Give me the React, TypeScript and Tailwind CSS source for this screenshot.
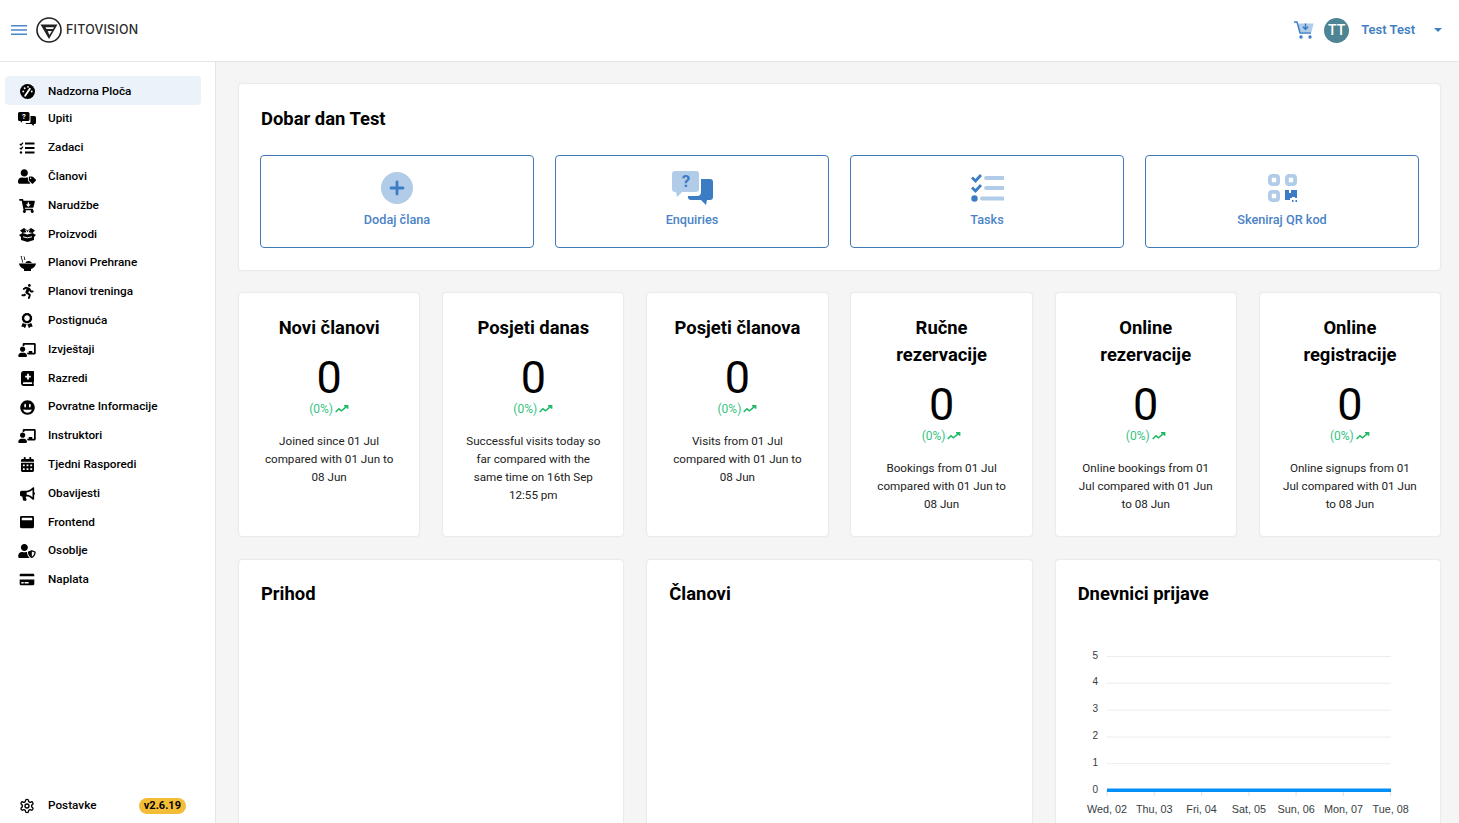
import React from "react";
import {
  FaUserTag, FaRunning, FaAward, FaChalkboardTeacher,
  FaBookMedical, FaGrinAlt, FaCalendarAlt, FaBullhorn, FaWindowMaximize, FaUserShield, FaCreditCard, FaCartArrowDown,
} from "react-icons/fa";
import { LuSettings } from "react-icons/lu";

type IconProps = { className?: string };

const Chat = ({ className }: IconProps) => (
  <svg viewBox="0 0 18 14" className={className} fill="currentColor">
    <path d="M1.500 0h8.500A1.500 1.500 0 0 1 11.500 1.500v6A1.500 1.500 0 0 1 10 9H4.500L3 10.800 2.500 9h-1A1.500 1.500 0 0 1 0 7.500v-6A1.500 1.500 0 0 1 1.500 0z" />
    <path d="M12.500 4h4A1.500 1.500 0 0 1 18 5.500v5a1.500 1.500 0 0 1-1.500 1.500H16l-.5 2-2-2H8.500a1.200 1.200 0 0 1-1-1h4a1 1 0 0 0 1-1z" />
    <text x="5.800" y="7.300" fontSize="7.500" fontWeight="700" textAnchor="middle" fill="#fff" fontFamily="Roboto, sans-serif">?</text>
  </svg>
);

const TaskList = ({ className }: IconProps) => (
  <svg viewBox="0 0 16 12" className={className} fill="none" stroke="currentColor">
    <path d="M.8 1.800 2 3 4 .6M.8 5.800 2 7 4 4.600" strokeWidth="1.200" />
    <circle cx="2" cy="10.500" r="1.200" fill="currentColor" stroke="none" />
    <path d="M6 1.500h9.500M6 6h9.500M6 10.500h9.500" strokeWidth="1.800" />
  </svg>
);

const Gauge = ({ className }: IconProps) => (
  <svg viewBox="0 0 16 16" className={className}>
    <circle cx="8" cy="8" r="8" fill="currentColor" />
    <path d="M5.500 12.500 10.500 5" stroke="#fff" strokeWidth="2" strokeLinecap="round" />
    <circle cx="3.500" cy="8" r="1" fill="#fff" />
    <circle cx="5" cy="4.500" r="1" fill="#fff" />
    <circle cx="8.500" cy="3" r="1" fill="#fff" />
    <circle cx="12.500" cy="8" r="1" fill="#fff" />
  </svg>
);

const BoxBits = ({ className }: IconProps) => (
  <svg viewBox="0 0 17 15" className={className} fill="currentColor">
    <path d="M1 3.500 5 1l3.500 2.500L12 1l4 2.500-2.500 2.500L8.500 5 3.500 6z" />
    <path d="M0 8l3.500-2 5 1.500L13.500 6 17 8l-2 2v3l-6.500 2L2 13v-3z" />
    <path d="M4 9.800l4.500 1 4.500-1" fill="none" stroke="#fff" strokeWidth="1" />
    <path d="M6.500 2.800 8.500 6l2-3.200" fill="none" stroke="#fff" strokeWidth="1" />
  </svg>
);

const Bowl = ({ className }: IconProps) => (
  <svg viewBox="0 0 17 15" className={className} fill="currentColor">
    <path d="M0 7.500h17C16.500 10.500 14.500 12.300 12 13v2H5v-2C2.500 12.300.500 10.500 0 7.500z" />
    <path d="M6.500 7 C7 4.500 11 4 13 7z" />
    <path d="M2 0c1 1.500 0 2 1 3.500s0 2 .6 3M5 .5c1 1.500 0 2 1 3.500" fill="none" stroke="currentColor" strokeWidth="1" />
  </svg>
);

const CartDuo = ({ className }: IconProps) => (
  <svg viewBox="0 0 20 18" className={className}>
    <path d="M4 2.500h15.500L17.500 11H5.500z" fill="#b1cce9" />
    <path d="M0 1h3l3 11h11" fill="none" stroke="#3b7cc4" strokeWidth="1.400" />
    <path d="M11.500 2.500v5M9 5.800l2.500 2.700 2.500-2.700" fill="none" stroke="#3b7cc4" strokeWidth="1.500" />
    <circle cx="7" cy="16" r="1.700" fill="#3b7cc4" />
    <circle cx="16" cy="16" r="1.700" fill="#3b7cc4" />
  </svg>
);

const nav: [string, React.ComponentType<IconProps>, string][] = [
  ["Nadzorna Ploča", Gauge, "w-[15px] h-[15px]"],
  ["Upiti", Chat, "w-[18px] h-[14px]"],
  ["Zadaci", TaskList, "w-[16px] h-[12px]"],
  ["Članovi", FaUserTag, "w-[18px] h-[15px]"],
  ["Narudžbe", FaCartArrowDown, "w-[16px] h-[14px]"],
  ["Proizvodi", BoxBits, "w-[17px] h-[15px]"],
  ["Planovi Prehrane", Bowl, "w-[17px] h-[15px]"],
  ["Planovi treninga", FaRunning, "w-[13px] h-[15px]"],
  ["Postignuća", FaAward, "w-[12px] h-[15px]"],
  ["Izvještaji", FaChalkboardTeacher, "w-[18px] h-[14px]"],
  ["Razredi", FaBookMedical, "w-[13px] h-[15px]"],
  ["Povratne Informacije", FaGrinAlt, "w-[15px] h-[15px]"],
  ["Instruktori", FaChalkboardTeacher, "w-[18px] h-[14px]"],
  ["Tjedni Rasporedi", FaCalendarAlt, "w-[13px] h-[15px]"],
  ["Obavijesti", FaBullhorn, "w-[15px] h-[14px]"],
  ["Frontend", FaWindowMaximize, "w-[14px] h-[14px]"],
  ["Osoblje", FaUserShield, "w-[18px] h-[14px]"],
  ["Naplata", FaCreditCard, "w-[16px] h-[13px]"],
];

const stats = [
  ["Novi članovi", "Joined since 01 Jul compared with 01 Jun to 08 Jun"],
  ["Posjeti danas", "Successful visits today so far compared with the same time on 16th Sep 12:55 pm"],
  ["Posjeti članova", "Visits from 01 Jul compared with 01 Jun to 08 Jun"],
  ["Ručne rezervacije", "Bookings from 01 Jul compared with 01 Jun to 08 Jun"],
  ["Online rezervacije", "Online bookings from 01 Jul compared with 01 Jun to 08 Jun"],
  ["Online registracije", "Online signups from 01 Jul compared with 01 Jun to 08 Jun"],
];

const LIGHT = "#b1cce9";
const DARK = "#3b7cc4";

const PlusIcon = () => (
  <svg viewBox="0 0 32 32" className="w-[32px] h-[32px]">
    <circle cx="16" cy="16" r="16" fill={LIGHT} />
    <path d="M16 10v12M10 16h12" stroke={DARK} strokeWidth="2.800" strokeLinecap="round" />
  </svg>
);

const EnquiryIcon = () => (
  <svg viewBox="0 0 41 34" className="w-[41px] h-[34px]">
    <path d="M3 0h21a3 3 0 0 1 3 3v15a3 3 0 0 1-3 3H10l-5 5-1-5H3a3 3 0 0 1-3-3V3a3 3 0 0 1 3-3z" fill={LIGHT} />
    <path d="M29 8h9a3 3 0 0 1 3 3v15a3 3 0 0 1-3 3h-3l-1 5-5-5H19a3 3 0 0 1-3-4h9a4 4 0 0 0 4-4z" fill={DARK} />
    <text x="14" y="15.500" fontSize="17" fontWeight="700" textAnchor="middle" fill={DARK} fontFamily="Roboto, sans-serif">?</text>
  </svg>
);

const TasksIcon = () => (
  <svg viewBox="0 0 33 28" className="w-[33px] h-[28px]">
    <path d="M1 3.500 4.500 7 10 1M1 13.500 4.500 17 10 11" fill="none" stroke={DARK} strokeWidth="2.800" />
    <circle cx="3.500" cy="24.500" r="3.200" fill={DARK} />
    <path d="M15 4h17M15 14h17M11 24.500h21" stroke={LIGHT} strokeWidth="3.800" strokeLinecap="round" />
  </svg>
);

const QrIcon = () => (
  <svg viewBox="0 0 29 28" className="w-[29px] h-[28px]">
    <g fill="none" stroke={LIGHT} strokeWidth="3.800">
      <rect x="1.900" y="1.900" width="8.200" height="8.200" rx="2" />
      <rect x="18.900" y="1.900" width="8.200" height="8.200" rx="2" />
      <rect x="1.900" y="17.900" width="8.200" height="8.200" rx="2" />
    </g>
    <path d="M17 16h4v3h2v-3h6v8h-2v-1h-3v1h-2v2h-5z" fill={DARK} />
    <path d="M24 26h1.500v2H24zM27.500 26H29v2h-1.500z" fill={DARK} />
  </svg>
);

const quick: [string, React.ReactNode][] = [
  ["Dodaj člana", <PlusIcon />],
  ["Enquiries", <EnquiryIcon />],
  ["Tasks", <TasksIcon />],
  ["Skeniraj QR kod", <QrIcon />],
];

const Logo = () => (
  <svg viewBox="0 0 26 26" className="w-[26px] h-[26px]">
    <circle cx="13" cy="13" r="12" fill="none" stroke="#222" strokeWidth="1.600" />
    <path d="M4.500 7.500h17L13 22z" fill="#222" />
    <path d="M9.500 10.300h8.500L17 12H10.500zM11.700 14h4.200L13.400 18z" fill="#fff" />
  </svg>
);

const Trend = () => (
  <svg viewBox="0 0 14 8" className="w-[14px] h-[8px] inline-block">
    <path d="M.7 7 4 3.800 6.500 5.800 12 1.200M9 .8h3.600v3" fill="none" stroke="#22b866" strokeWidth="1.600" />
  </svg>
);

const Chart = () => {
  const ticks = [1107, 1154.3, 1201.6, 1248.9, 1296.1, 1343.4, 1390.7];
  const labels = ["Wed, 02", "Thu, 03", "Fri, 04", "Sat, 05", "Sun, 06", "Mon, 07", "Tue, 08"];
  const ys = [656.5, 683.3, 710.2, 737, 763.7];
  const ox = 1055;
  const oy = 640;
  return (
    <svg width="386" height="190" className="absolute left-[-1px] top-[80px]" fontFamily="'Liberation Sans', sans-serif">
      {ys.map((y, i) => (
        <g key={y}>
          <line x1={1107 - ox} x2={1391 - ox} y1={y - oy} y2={y - oy} stroke="#ececec" strokeWidth="1" />
          <text x={1098 - ox} y={y - oy + 2} fontSize="10" fill="#373d3f" textAnchor="end">{5 - i}</text>
        </g>
      ))}
      <text x={1098 - ox} y={793 - oy} fontSize="10" fill="#373d3f" textAnchor="end">0</text>
      {ticks.map((x, i) => (
        <g key={x}>
          <line x1={x - ox} x2={x - ox} y1={790 - oy} y2={796 - oy} stroke="#e0e0e0" />
          <text x={x - ox} y={813 - oy} fontSize="10.800" fill="#373d3f" textAnchor="middle">{labels[i]}</text>
        </g>
      ))}
      <line x1={1107 - ox} x2={1391 - ox} y1={790.300 - oy} y2={790.300 - oy} stroke="#008ffb" strokeWidth="3.500" />
    </svg>
  );
};

const cardCls = "bg-white border border-[#ebebeb] rounded-[4px] shadow-[0_0_2px_rgba(0,0,0,0.04)]";

export default function App() {
  return (
    <div className="h-screen flex flex-col overflow-hidden bg-[#f5f5f5] font-[Roboto,sans-serif] text-black">
      <header className="h-[62px] shrink-0 bg-white border-b border-[#e6e6e6] flex items-center pl-[11px] pr-[17px]">
        <svg viewBox="0 0 16 10" className="w-[16px] h-[10px] mr-[9px] -mt-[1px]">
          <path d="M0 .8h16M0 5h16M0 9.200h16" stroke="#4a86c8" strokeWidth="1.500" />
        </svg>
        <div className="-mt-[1px] flex items-center">
          <Logo />
          <span className="ml-[4px] font-[Inter,sans-serif] text-[12.400px] font-medium tracking-[0.25px] text-[#2a2a2a]">FITOVISION</span>
        </div>
        <div className="ml-auto flex items-center -mt-[1px]">
          <CartDuo className="w-[20px] h-[18px]" />
          <div className="ml-[10px] w-[25px] h-[25px] rounded-full bg-[#4f8494] text-white text-[14px] font-medium flex items-center justify-center">TT</div>
          <span className="ml-[12px] text-[13px] font-semibold text-[#3f7fc4]">Test Test</span>
          <span className="ml-[19px] w-0 h-0 border-x-[4px] border-x-transparent border-t-[4px] border-t-[#3f7fc4]" />
        </div>
      </header>
      <div className="flex-1 flex min-h-0">
        <aside className="w-[216px] shrink-0 bg-white border-r border-[#e6e6e6] flex flex-col pt-[14px]">
          <nav className="flex flex-col">
            {nav.map(([label, Icon, size], i) => (
              <div
                key={label}
                className={`h-[28.8px] ml-[5px] w-[196px] pl-[13px] rounded-[4px] flex items-center text-[11.750px] font-medium ${i === 0 ? "bg-[#ebf2fa] pt-[2px]" : ""}`}
              >
                <span className="w-[18px] flex justify-center"><Icon className={size} /></span>
                <span className="ml-[12px]">{label}</span>
              </div>
            ))}
          </nav>
          <div className="mt-auto h-[36px] -mb-[1px] ml-[18px] mr-[29px] flex items-center text-[11.750px] font-medium">
            <span className="w-[18px] flex justify-center"><LuSettings className="w-[16px] h-[16px]" /></span>
            <span className="ml-[12px]">Postavke</span>
            <span className="ml-auto h-[16px] px-[5px] rounded-full bg-[#f4bd38] text-[11px] font-bold flex items-center">v2.6.19</span>
          </div>
        </aside>
        <main className="flex-1 min-w-0 pl-[22px] pr-[18px] pt-[21px] flex flex-col overflow-hidden">
          <section className={`${cardCls} h-[188px] shrink-0 p-[21px]`}>
            <h2 className="ml-[1px] text-[18.400px] leading-[27px] font-bold">Dobar dan Test</h2>
            <div className="mt-[23px] grid grid-cols-4 gap-[21px]">
              {quick.map(([label, icon]) => (
                <div key={label} className="h-[93px] rounded-[4px] border border-[#3f79b8] flex flex-col items-center pt-[15px]">
                  <div className="h-[34px] flex items-center justify-center">{icon}</div>
                  <div className="mt-[6px] text-[12.700px] leading-[18px] font-medium text-[#4a83c6]">{label}</div>
                </div>
              ))}
            </div>
          </section>
          <section className="mt-[21px] grid grid-cols-6 gap-[21.900px] shrink-0">
            {stats.map(([title, desc]) => (
              <div key={title} className={`${cardCls} h-[245px] px-[21px] pt-[21px] text-center`}>
                <div className="text-[18.400px] leading-[27px] font-bold">{title}</div>
                <div className="mt-[15px] text-[45px] leading-[44px]">0</div>
                <div className="text-[12px] leading-[18px] text-[#35c37f] flex items-center justify-center gap-[2px]">
                  (0%)<Trend />
                </div>
                <div className="mt-[14px] text-[11.650px] leading-[18px] text-[#222]">{desc}</div>
              </div>
            ))}
          </section>
          <section className="mt-[22px] grid grid-cols-3 gap-[22px] shrink-0">
            {["Prihod", "Članovi", "Dnevnici prijave"].map((t, i) => (
              <div key={t} className={`${cardCls} h-[300px] pt-[20px] px-[21px] relative`}>
                <div className="ml-[1px] text-[18.400px] leading-[27px] font-bold">{t}</div>
                {i === 2 && <Chart />}
              </div>
            ))}
          </section>
        </main>
      </div>
    </div>
  );
}
